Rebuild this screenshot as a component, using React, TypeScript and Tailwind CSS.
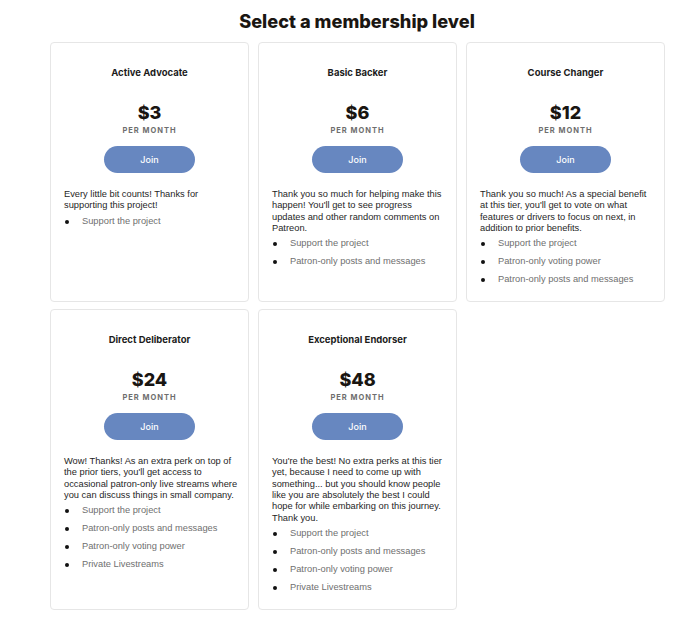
const tiers = [
  {
    name: 'Active Advocate',
    price: '$3',
    lines: ['Every little bit counts! Thanks for', 'supporting this project!'],
    perks: ['Support the project'],
  },
  {
    name: 'Basic Backer',
    price: '$6',
    lines: [
      'Thank you so much for helping make this',
      "happen! You'll get to see progress",
      'updates and other random comments on',
      'Patreon.',
    ],
    perks: ['Support the project', 'Patron-only posts and messages'],
  },
  {
    name: 'Course Changer',
    price: '$12',
    lines: [
      'Thank you so much! As a special benefit',
      "at this tier, you'll get to vote on what",
      'features or drivers to focus on next, in',
      'addition to prior benefits.',
    ],
    perks: ['Support the project', 'Patron-only voting power', 'Patron-only posts and messages'],
  },
  {
    name: 'Direct Deliberator',
    price: '$24',
    lines: [
      'Wow! Thanks! As an extra perk on top of',
      "the prior tiers, you'll get access to",
      'occasional patron-only live streams where',
      'you can discuss things in small company.',
    ],
    perks: ['Support the project', 'Patron-only posts and messages', 'Patron-only voting power', 'Private Livestreams'],
  },
  {
    name: 'Exceptional Endorser',
    price: '$48',
    lines: [
      "You're the best! No extra perks at this tier",
      'yet, because I need to come up with',
      'something... but you should know people',
      'like you are absolutely the best I could',
      'hope for while embarking on this journey.',
      'Thank you.',
    ],
    perks: ['Support the project', 'Patron-only posts and messages', 'Patron-only voting power', 'Private Livestreams'],
  },
]

type Tier = (typeof tiers)[number]

const TierCard = ({ tier }: { tier: Tier }) => (
  <div className="flex flex-col rounded-[4px] border border-[#e6e6e6] bg-white px-[12px] pt-[24px] pb-[12px]">
    <h3 className="text-center font-['Inter',sans-serif] text-[9.5px] leading-[12px] font-bold text-[#1c1c1c]">
      {tier.name}
    </h3>
    <div className="mt-[22px] text-center font-['Inter',sans-serif] text-[18px] leading-[24px] font-extrabold text-[#1a1612]">
      {tier.price}
    </div>
    <div className="mt-[1px] text-center font-['Inter',sans-serif] text-[7.5px] leading-[10px] font-bold tracking-[1px] text-[#6e6e6e]">
      PER MONTH
    </div>
    <button className="mx-auto mt-[10px] h-[27px] w-[91px] rounded-full bg-[#6787c0] font-['Inter',sans-serif] text-[9px] font-medium text-white">
      Join
    </button>
    <p className="mt-[16px] pl-[1px] font-['Liberation_Sans',sans-serif] text-[9.3px] leading-[11.3px] whitespace-nowrap text-[#1f1f1f]">
      {tier.lines.map((l) => (
        <span key={l} className="block">
          {l}
        </span>
      ))}
    </p>
    <ul className="mt-[1px] font-['Liberation_Sans',sans-serif] text-[9.3px] text-[#6f6f6f]">
      {tier.perks.map((p) => (
        <li key={p} className="flex h-[18px] items-center">
          <span className="ml-[2px] h-[4px] w-[4px] rounded-full bg-[#111]" />
          <span className="ml-[13px]">{p}</span>
        </li>
      ))}
    </ul>
  </div>
)

export default function App() {
  return (
    <div className="h-[627px] w-[700px] bg-white">
      <h1 className="pt-[9px] pl-[14px] text-center font-['Inter',sans-serif] text-[18.2px] leading-[24px] font-extrabold text-[#1a1612]">
        Select a membership level
      </h1>
      <div className="mt-[9px] grid grid-cols-[199px_199px_199px] items-stretch gap-x-[9px] gap-y-[7px] pl-[50px]">
        {tiers.map((t) => (
          <TierCard key={t.name} tier={t} />
        ))}
      </div>
    </div>
  )
}
